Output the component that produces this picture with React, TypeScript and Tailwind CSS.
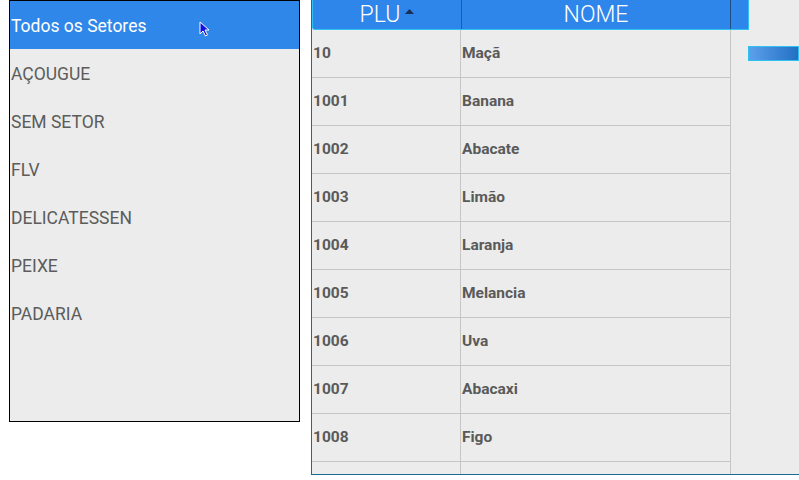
import React from 'react';

const setores = ['Todos os Setores', 'AÇOUGUE', 'SEM SETOR', 'FLV', 'DELICATESSEN', 'PEIXE', 'PADARIA'];

const produtos: [string, string][] = [
  ['10', 'Maçã'],
  ['1001', 'Banana'],
  ['1002', 'Abacate'],
  ['1003', 'Limão'],
  ['1004', 'Laranja'],
  ['1005', 'Melancia'],
  ['1006', 'Uva'],
  ['1007', 'Abacaxi'],
  ['1008', 'Figo'],
  ['', ''],
];

const Cursor = () => (
  <svg width="12" height="18" viewBox="0 0 12 18" className="absolute left-[189px] top-[20px]">
    <path d="M1 1 L1 13 L4 10 L6.5 15 L8.5 14 L6 9 L10 9 Z" fill="#1010e0" stroke="#ffffff" strokeWidth="1" />
  </svg>
);

const App: React.FC = () => {
  return (
    <div className="w-[799px] h-[480px] bg-white flex items-start overflow-hidden" style={{ fontFamily: 'Roboto, "Liberation Sans", sans-serif' }}>
      {/* lista de setores */}
      <div className="ml-[9px] w-[291px] h-[422px] border border-black bg-[#ebeceb] flex flex-col">
        {setores.map((s, i) => (
          <div
            key={s}
            className={`relative h-[48px] shrink-0 flex items-center pl-[1px] pt-[2px] text-[17.5px] ${i === 0 ? 'bg-[#2f87ea] text-white' : 'text-[#5c5c5c]'}`}
          >
            {s}
            {i === 0 && <Cursor />}
          </div>
        ))}
      </div>

      {/* tabela de produtos */}
      <div className="ml-[11px] flex-1 h-[475px] border-l border-b border-[#1d6a94] bg-[#ebeceb] flex flex-col overflow-hidden">
        <div className="h-[30px] shrink-0 flex w-[437px] bg-[#2f86ea] border-b border-l border-r border-[#2ec2f2] rounded-bl-[3px] text-white text-[23px] font-light">
          <div className="w-[149px] flex items-center justify-center gap-[5px] border-r border-[#1e5ea8] leading-none">
            <span>PLU</span>
            <svg width="9" height="5" viewBox="0 0 9 5" className="mb-[6px]">
              <path d="M0 5 L4.5 0 L9 5 Z" fill="#1b2f55" />
            </svg>
          </div>
          <div className="w-[269px] flex items-center justify-center border-r border-[#1c4f86] leading-none">NOME</div>
          <div className="flex-1" />
        </div>
        <div className="flex flex-1 min-h-0 overflow-hidden">
          <div className="w-[419px] flex flex-col border-r border-[#c6c6c6]">
            {produtos.map(([plu, nome], i) => (
              <div key={i} className="h-[48px] shrink-0 flex border-b border-[#c6c6c6] text-[15.5px] font-bold text-[#5a5a5a]">
                <div className="w-[149px] pl-[1px] flex items-center border-r border-[#c6c6c6]">{plu}</div>
                <div className="flex-1 pl-[1px] flex items-center">{nome}</div>
              </div>
            ))}
          </div>
          <div className="flex-1 pt-[16px]">
            <div className="ml-[17px] h-[15px] border border-[#2ec2f2] bg-gradient-to-r from-[#5ba0eb] to-[#2170c4]" />
          </div>
        </div>
      </div>
    </div>
  );
};

export default App;
